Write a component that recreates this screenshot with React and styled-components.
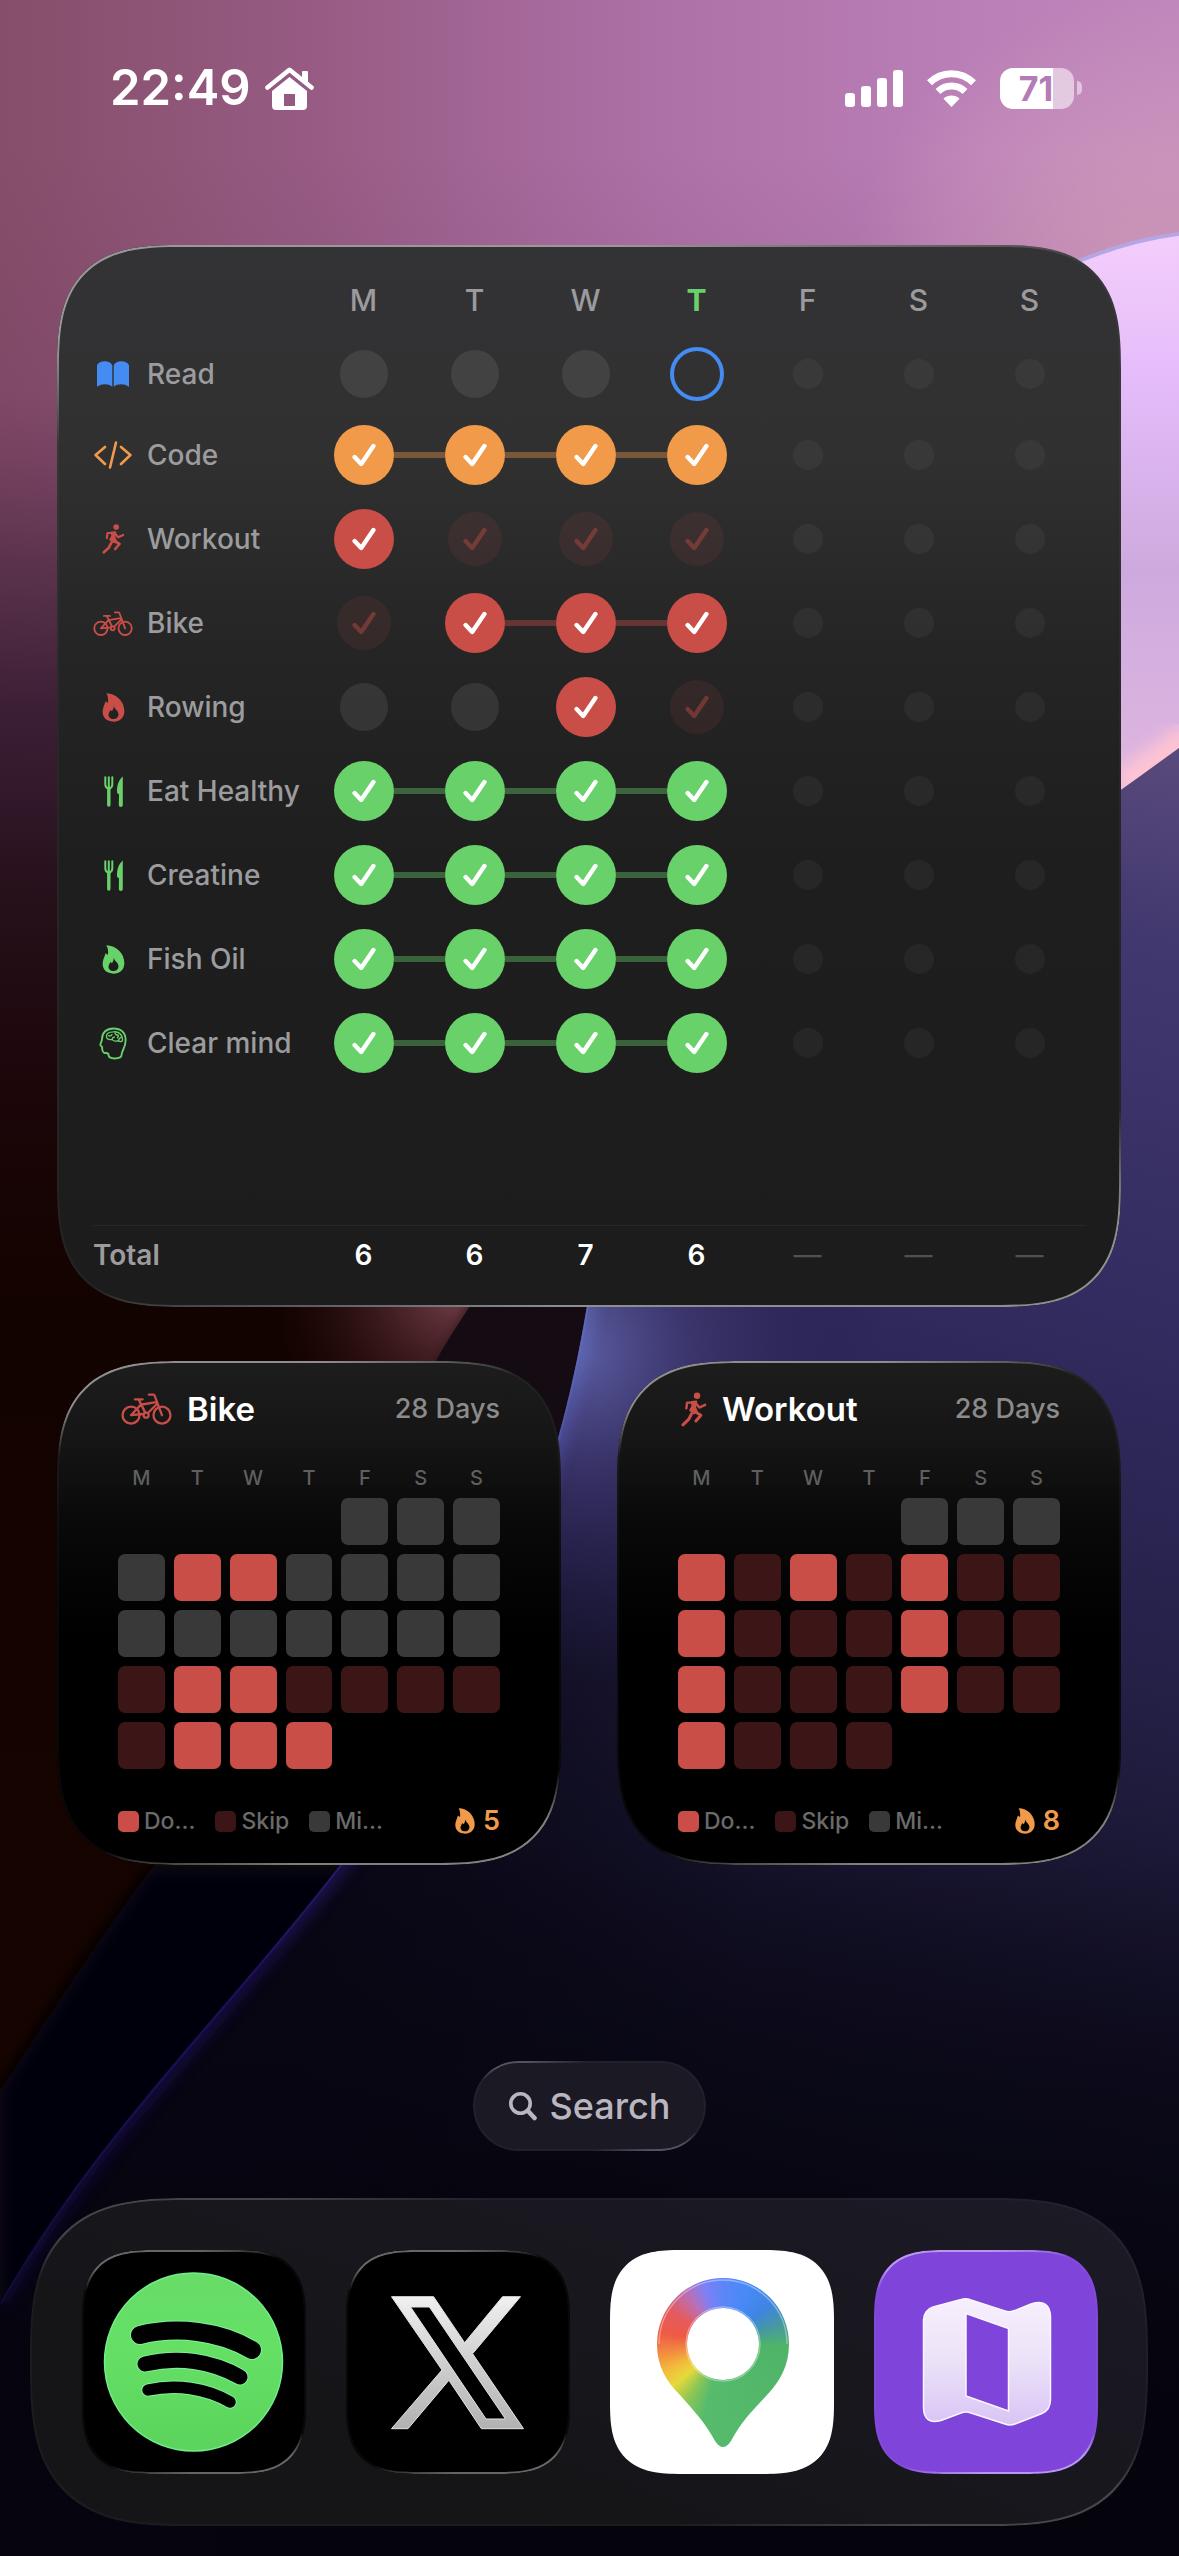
import React from "react";
import styled, { createGlobalStyle, css } from "styled-components";

const color = {
  green: "#68d16a",
  orange: "#f19b4a",
  red: "#c94e48",
  blue: "#448cf1",
  skip: "#3c1616",
  missed: "#393939",
};

const GlobalStyle = createGlobalStyle`
  *, *::before, *::after { box-sizing: border-box; }
  body {
    margin: 0;
    background: #05040c;
    color: #fff;
    font-family: Inter, "Liberation Sans", sans-serif;
  }
`;

/* ---------- Page ---------- */

const Screen = styled.div`
  position: relative;
  isolation: isolate;
  min-height: 100vh;
  display: flex;
  flex-direction: column;
  padding-bottom: 30px;
  overflow: hidden;
`;

const WallpaperSvg = styled.svg`
  position: absolute;
  inset: 0;
  z-index: -1;
  width: 100%;
  height: 100%;
`;

const StatusBar = styled.header`
  display: flex;
  align-items: center;
  justify-content: space-between;
  height: 176px;
  padding: 0 97px 0 110px;
`;

const StatusGroup = styled.div`
  display: flex;
  align-items: center;
  gap: ${(p) => p.$gap}px;
`;

const Clock = styled.time`
  font-size: 49px;
  font-weight: 600;
  line-height: 60px;
`;

const Battery = styled.div`
  display: flex;
  align-items: center;
  gap: 3px;
`;

const BatteryBody = styled.div`
  width: 74px;
  height: 41px;
  padding-right: 2px;
  border-radius: 13px;
  background: linear-gradient(to right, #fff 71%, rgba(255, 255, 255, 0.55) 71%);
  color: #b37cb6;
  font-size: 34px;
  font-weight: 700;
  line-height: 41px;
  text-align: center;
`;

const BatteryTip = styled.div`
  width: 5px;
  height: 14px;
  border-radius: 0 5px 5px 0;
  background: rgba(255, 255, 255, 0.5);
`;

const Widgets = styled.main`
  display: grid;
  grid-template-columns: 1fr 1fr;
  gap: 54px 56px;
  padding: 69px 58px 0 57px;
`;

const corners = (round, smooth) => css`
  border-radius: ${round}px;
  @supports (corner-shape: squircle) {
    border-radius: ${smooth}px;
    corner-shape: superellipse(1.5);
  }
`;

const glassEdge = css`
  position: relative;
  &::after {
    content: "";
    position: absolute;
    inset: 0;
    border-radius: inherit;
    corner-shape: inherit;
    padding: 2px;
    background: linear-gradient(
      170deg,
      rgba(255, 255, 255, ${(p) => p.$edge || 0.5}) 0%,
      rgba(255, 255, 255, ${(p) => p.$edge || 0.5}) 8%,
      rgba(255, 255, 255, 0.03) 16%,
      rgba(255, 255, 255, 0.03) 84%,
      rgba(255, 255, 255, ${(p) => p.$edge || 0.5}) 92%,
      rgba(255, 255, 255, ${(p) => p.$edge || 0.5}) 100%
    );
    mask: linear-gradient(#000 0 0) content-box exclude, linear-gradient(#000 0 0);
    pointer-events: none;
  }
`;

/* ---------- Week widget ---------- */

const WeekWidget = styled.section`
  ${glassEdge}
  ${corners(92, 124)}
  grid-column: 1 / -1;
  padding: 20px 36px 22px;
  background: linear-gradient(#333335 0%, #303031 20%, #252526 38%, #1e1e1f 58%, #1c1c1d 100%);
`;

const WeekTable = styled.table`
  width: 100%;
  table-layout: fixed;
  border-collapse: collapse;
`;

const LabelColumn = styled.col`
  width: 215px;
`;

const DayHead = styled.th`
  height: 70px;
  padding: 0;
  color: ${(p) => (p.$today ? color.green : "#9b9b9d")};
  font-size: 30px;
  font-weight: ${(p) => (p.$today ? 700 : 500)};
  line-height: 36px;
`;

const HabitRow = styled.tr`
  height: ${(p) => (p.$compact ? 78 : 84)}px;
`;

const HabitHead = styled.th`
  padding: 0;
  text-align: left;
  font-weight: 500;
`;

const HabitLabel = styled.div`
  display: grid;
  grid-template-columns: 40px 1fr;
  align-items: center;
  gap: 14px;
  color: #9c9c9e;
  font-size: 28px;
  line-height: 34px;
  white-space: nowrap;
`;

const IconSlot = styled.span`
  display: flex;
  justify-content: center;
  color: ${(p) => p.$tint};
`;

const DayCell = styled.td`
  padding: 0;
`;

const Track = styled.div`
  display: flex;
  align-items: center;
  justify-content: center;
`;

const Link = styled.span`
  flex: 1;
  height: 6px;
  background: ${(p) => (p.$on ? p.$tint : "transparent")};
  opacity: 0.38;
`;

const Mark = styled.span`
  display: flex;
  align-items: center;
  justify-content: center;
  border-radius: 50%;
  ${(p) =>
    ({
      done: css`
        width: 60px;
        height: 60px;
        background: ${p.$tint};
        color: #fff;
      `,
      skip: css`
        width: 54px;
        height: 54px;
        background: rgba(201, 78, 72, 0.1);
        color: rgba(201, 78, 72, 0.42);
      `,
      missed: css`
        width: 48px;
        height: 48px;
        background: rgba(255, 255, 255, 0.085);
      `,
      open: css`
        width: 54px;
        height: 54px;
        border: 4px solid ${p.$tint};
      `,
      future: css`
        width: 30px;
        height: 30px;
        background: rgba(255, 255, 255, 0.045);
      `,
    })[p.$kind]}
`;

const SpacerRow = styled.tr`
  height: 140px;
`;

const TotalRow = styled.tr`
  height: 60px;
  border-top: 1px solid #282829;
  font-size: 28px;
  line-height: 34px;
`;

const TotalHead = styled.th`
  padding: 0;
  text-align: left;
  color: #9c9c9e;
  font-weight: 600;
`;

const TotalCell = styled.td`
  padding: 0;
  text-align: center;
  color: ${(p) => (p.$empty ? "#515152" : "#fff")};
  font-weight: ${(p) => (p.$empty ? 400 : 600)};
`;

/* ---------- Habit widget ---------- */

const HabitWidget = styled.section`
  ${glassEdge}
  ${corners(92, 124)}
  padding: 28px 61px;
  background: linear-gradient(#1d1d1d 0%, #151515 16%, #090909 32%, #000 55%);
`;

const HabitHeader = styled.header`
  display: flex;
  align-items: center;
  height: 40px;
`;

const HabitTitle = styled.h2`
  flex: 1;
  margin: 0 0 0 15px;
  font-size: 33px;
  font-weight: 600;
  line-height: 40px;
`;

const HabitIcon = styled.span`
  display: flex;
  padding-left: 3px;
  color: ${color.red};
`;

const Period = styled.span`
  color: #8b8b8b;
  font-size: 27px;
  font-weight: 500;
  line-height: 32px;
`;

const Calendar = styled.table`
  width: calc(100% + 18px);
  margin: 29px -9px 0;
  table-layout: fixed;
  border-collapse: separate;
  border-spacing: 9px 9px;
`;

const WeekdayHead = styled.th`
  height: 22px;
  padding: 0;
  color: #5f5f5f;
  font-size: 20px;
  font-weight: 500;
  line-height: 22px;
`;

const CalendarCell = styled.td`
  height: 47px;
  padding: 0;
  border-radius: 7px;
  background: ${(p) => p.$fill};
`;

const Legend = styled.footer`
  display: flex;
  align-items: center;
  gap: 20px;
  height: 32px;
  margin-top: 27px;
  color: #6a6a6a;
  font-size: 23px;
  font-weight: 500;
  line-height: 32px;
`;

const LegendItem = styled.span`
  display: flex;
  align-items: center;
  gap: 5px;
`;

const Swatch = styled.span`
  width: 21px;
  height: 21px;
  border-radius: 5px;
  background: ${(p) => p.$fill};
`;

const Streak = styled.span`
  display: flex;
  align-items: center;
  gap: 8px;
  margin-left: auto;
  color: ${color.orange};
  font-size: 27px;
  font-weight: 600;
`;

/* ---------- Search and dock ---------- */

const SearchButton = styled.button`
  ${glassEdge}
  display: flex;
  align-items: center;
  align-self: center;
  gap: 13px;
  height: 90px;
  margin-top: auto;
  padding: 0 36px;
  border: 0;
  border-radius: 45px;
  background: #1b1924;
  color: #b9b6c0;
  font-family: inherit;
  font-size: 36px;
  font-weight: 500;
  line-height: 42px;
`;

const Dock = styled.nav`
  ${glassEdge}
  ${corners(128, 158)}
  display: grid;
  grid-template-columns: repeat(4, 1fr);
  gap: 40px;
  margin: 47px 31px 0 30px;
  padding: 52px 50px 52px 52px;
  background: linear-gradient(20deg, #151518 30%, #1c1a26 100%);
`;

const AppLink = styled.a`
  ${glassEdge}
  ${corners(56, 72)}
  display: block;
  aspect-ratio: 1;
  background: ${(p) => p.$fill};
`;

const AppArt = styled.svg`
  display: block;
  width: 100%;
  height: 100%;
`;

const PinPaint = styled.div`
  width: 224px;
  height: 224px;
  background: conic-gradient(
    from 0deg at 113px 94px,
    #5c86f8 0deg,
    #4889f8 25deg,
    #3f85e0 50deg,
    #4597a6 70deg,
    #4fb468 92deg,
    #57bb6c 195deg,
    #8cc655 212deg,
    #e6d93c 230deg,
    #f3bb3c 245deg,
    #f28a40 262deg,
    #ee5b45 280deg,
    #e55a5e 302deg,
    #b970b6 325deg,
    #7d80f6 342deg,
    #5c86f8 360deg
  );
`;

/* ---------- Icons ---------- */

const stroke = {
  fill: "none",
  stroke: "currentColor",
  strokeLinecap: "round",
  strokeLinejoin: "round",
};

const Check = () => (
  <svg width="24" height="24" viewBox="0 0 24 24" {...stroke} strokeWidth="4.4" aria-hidden="true">
    <path d="M2.6 14 9.2 21 21.4 3" />
  </svg>
);

const BookIcon = () => (
  <svg width="32" height="26" viewBox="0 0 31 25" fill="currentColor" aria-hidden="true">
    <path d="M0 4C2-.9 12.500-1.500 14.800 4V24.800C11.500 21.600 4.500 21.600 0 24.800ZM16.200 4C18.500-1.500 29-.9 31 4V24.800C26.500 21.600 19.500 21.600 16.200 24.800Z" />
  </svg>
);

const CodeIcon = () => (
  <svg width="38" height="28" viewBox="0 0 38 28" {...stroke} strokeWidth="2.6" aria-hidden="true">
    <path d="M11 6 1.600 14 11 23M27 6 36.400 14 27 23M22 1.500 16 26.500" />
  </svg>
);

const RunIcon = ({ height }) => (
  <svg width={Math.round(height * 0.75)} height={height} viewBox="0 0 68 90" {...stroke} aria-hidden="true">
    <circle cx="42" cy="9" r="8.500" fill="currentColor" stroke="none" />
    <path d="M14 42 16 27H31M40 30 48 40 63 33" strokeWidth="6.500" />
    <path d="M28 25 40 24 37 40 42 51 33 55 24 47 30 36Z" fill="currentColor" strokeWidth="5" />
    <path d="M37 51 52 60 39 75" strokeWidth="8" />
    <path d="M27 57 20 71 5 85" strokeWidth="8" />
  </svg>
);

const BikeIcon = ({ width }) => (
  <svg width={width} height={Math.round(width * 0.62)} viewBox="0 0 132 82" {...stroke} strokeWidth="6" aria-hidden="true">
    <circle cx="26" cy="57" r="22" />
    <circle cx="106" cy="57" r="22" />
    <circle cx="65" cy="57" r="6.500" />
    <path d="M36 16H56M46 17 63 51M26 57 51 30 91 23M26 57 58 54M69 52 93 28M72 4H84Q87 4 88 9L106 57" />
  </svg>
);

const FlameIcon = ({ height }) => (
  <svg width={Math.round(height * 0.78)} height={height} viewBox="2 1 68 88" fill="currentColor" fillRule="evenodd" aria-hidden="true">
    <path d="M14 2C45 2 69 28 69 56C69 76 54 88 36 88C16 88 3 76 3 59C3 46 8 40 12 26L19 31C21 20 19 10 14 2ZM37 39C39 52 52 54 51 67C50 77 42 80 36 80C27 80 20 74 21 66C22 59 26 56 27 52L31 56C35 52 37 46 37 39Z" />
  </svg>
);

const ForkKnifeIcon = () => (
  <svg width="19" height="31" viewBox="0 0 19 31" aria-hidden="true">
    <g {...stroke}>
      <path d="M1.300 1.200V8.500Q1.500 12 4.800 13Q8.100 12 8.300 8.500V1.200M4.800 1.200V12" strokeWidth="2" />
      <path d="M4.800 12V29" strokeWidth="3.400" />
    </g>
    <path d="M18.800.4C14.500 4 13 9 13 15.500C13 17.700 14 18 15 18L14.800 29A2 2 0 0 0 18.800 29Z" fill="currentColor" />
  </svg>
);

const MindIcon = () => (
  <svg width="28" height="33" viewBox="0 0 82 96" {...stroke} strokeWidth="5.500" aria-hidden="true">
    <path d="M28 82C28 90 34 92 46 92C58 92 66 88 66 82C66 68 78 62 78 38C78 16 64 4 42 4C22 4 9 16 9 34C9 42 3 48 4 53C5 56 9 55 9 58C9 72 12 76 20 76C26 76 28 77 28 82Z" />
    <path d="M22 29C20 20 28 14 42 14C58 12 69 22 69 37C69 43 62 44 57 40C50 42 42 41 38 36C28 38 23 35 22 29ZM28 25Q34 28 38 22M38 36Q39 30 45 29M47 18Q49 24 54 23Q60 24 54 31M57 40Q58 33 64 30" strokeWidth="4" />
  </svg>
);

const HomeIcon = () => (
  <svg width="49" height="43" viewBox="0 0 49 43" aria-hidden="true">
    <path d="M24.500 10 42 24V39Q42 43 38 43H11Q7 43 7 39V24ZM19 27V39H30V27Z" fill="#fff" fillRule="evenodd" />
    <path d="M2.500 20.500 24.500 2.800 46.500 20.500" fill="none" stroke="#fff" strokeWidth="4.600" strokeLinecap="round" strokeLinejoin="round" />
    <path d="M37 5Q37 4 38 4H42Q43 4 43 5V16L37 11Z" fill="#fff" />
  </svg>
);

const SignalIcon = () => (
  <svg width="58" height="37" viewBox="0 0 58 37" fill="#fff" role="img" aria-label="Signal">
    <rect x="0" y="23" width="10" height="14" rx="3" />
    <rect x="16" y="16" width="10" height="21" rx="3" />
    <rect x="32" y="8" width="10" height="29" rx="3" />
    <rect x="48" y="0" width="10" height="37" rx="3" />
  </svg>
);

const WifiIcon = () => (
  <svg width="51" height="37" viewBox="0 0 51 37" role="img" aria-label="Wi-Fi">
    <path d="M3.500 12.800A31 31 0 0 1 47.500 12.800M12 21.500A19.500 19.500 0 0 1 39 21.500" fill="none" stroke="#fff" strokeWidth="7" />
    <path d="M25.500 37 17.500 28.800A11.500 11.500 0 0 1 33.500 28.800Z" fill="#fff" />
  </svg>
);

const SearchIcon = () => (
  <svg width="28" height="29" viewBox="0 0 28 29" {...stroke} aria-hidden="true">
    <circle cx="11.500" cy="11.500" r="9.700" strokeWidth="3.600" />
    <path d="M19 19 25.500 26" strokeWidth="4.600" />
  </svg>
);

const Wallpaper = () => (
  <WallpaperSvg viewBox="0 0 1179 2556" preserveAspectRatio="none" aria-hidden="true">
    <defs>
      <linearGradient id="sky" x1="0" y1="0" x2="1" y2="0">
        <stop offset="0" stopColor="#864e69" />
        <stop offset=".28" stopColor="#985c85" />
        <stop offset=".55" stopColor="#ad70a6" />
        <stop offset=".8" stopColor="#b97eb6" />
        <stop offset="1" stopColor="#bf86bc" />
      </linearGradient>
      <linearGradient id="dusk" x1="0" y1="0" x2="0" y2="1">
        <stop offset="0" stopColor="#5a2a52" stopOpacity="0" />
        <stop offset=".1" stopColor="#5a2a52" stopOpacity=".15" />
        <stop offset=".17" stopColor="#3f2038" stopOpacity=".6" />
        <stop offset=".23" stopColor="#341a30" stopOpacity=".9" />
        <stop offset=".31" stopColor="#26101a" />
        <stop offset=".4" stopColor="#1b0508" />
        <stop offset=".48" stopColor="#130300" />
        <stop offset=".85" stopColor="#170400" />
        <stop offset="1" stopColor="#0d0200" />
      </linearGradient>
      <radialGradient id="blush" gradientUnits="userSpaceOnUse" cx="1150" cy="290" r="300">
        <stop offset="0" stopColor="#d9a6bd" stopOpacity=".75" />
        <stop offset="1" stopColor="#d9a6bd" stopOpacity="0" />
      </radialGradient>
      <radialGradient id="ember" gradientUnits="userSpaceOnUse" cx="455" cy="1290" r="180">
        <stop offset="0" stopColor="#74404a" />
        <stop offset="1" stopColor="#3a1218" stopOpacity="0" />
      </radialGradient>
      <linearGradient id="petal" gradientUnits="userSpaceOnUse" x1="0" y1="240" x2="0" y2="790">
        <stop offset="0" stopColor="#f3cdfb" />
        <stop offset=".25" stopColor="#e5bcfa" />
        <stop offset=".6" stopColor="#cdaade" />
        <stop offset="1" stopColor="#e0b6e0" />
      </linearGradient>
      <linearGradient id="night" gradientUnits="userSpaceOnUse" x1="1179" y1="750" x2="760" y2="2300">
        <stop offset="0" stopColor="#5a4a7c" />
        <stop offset=".12" stopColor="#41386f" />
        <stop offset=".38" stopColor="#302a5d" />
        <stop offset=".6" stopColor="#221e42" />
        <stop offset=".78" stopColor="#100e22" />
        <stop offset="1" stopColor="#06050f" />
      </linearGradient>
      <radialGradient id="glow" gradientUnits="userSpaceOnUse" cx="575" cy="1350" r="330">
        <stop offset="0" stopColor="#5d60a6" />
        <stop offset=".35" stopColor="#474080" stopOpacity=".7" />
        <stop offset="1" stopColor="#2c2660" stopOpacity="0" />
      </radialGradient>
      <linearGradient id="shade" gradientUnits="userSpaceOnUse" x1="330" y1="1700" x2="780" y2="1800">
        <stop offset="0" stopColor="#080613" stopOpacity=".9" />
        <stop offset="1" stopColor="#080613" stopOpacity="0" />
      </linearGradient>
      <linearGradient id="rim" gradientUnits="userSpaceOnUse" x1="0" y1="1300" x2="0" y2="2400">
        <stop offset="0" stopColor="#6478c6" />
        <stop offset=".3" stopColor="#4636a8" />
        <stop offset=".65" stopColor="#26147a" />
        <stop offset="1" stopColor="#120a3c" />
      </linearGradient>
      <linearGradient id="floor" gradientUnits="userSpaceOnUse" x1="0" y1="1850" x2="0" y2="2400">
        <stop offset="0" stopColor="#05040d" stopOpacity="0" />
        <stop offset="1" stopColor="#05040d" stopOpacity=".75" />
      </linearGradient>
      <clipPath id="nightArea">
        <path d="M1179 748 1121 790 C900 950 640 1100 588 1300 C565 1440 520 1620 340 1865 C220 2020 100 2130 0 2303V2556H1179Z" />
      </clipPath>
      <filter id="soft" x="-20%" y="-20%" width="140%" height="140%">
        <feGaussianBlur stdDeviation="8" />
      </filter>
    </defs>
    <rect width="1179" height="2556" fill="url(#sky)" />
    <rect width="1179" height="700" fill="url(#blush)" />
    <rect y="150" width="1179" height="2406" fill="url(#dusk)" />
    <rect x="200" y="1100" width="400" height="400" fill="url(#ember)" />
    <path d="M500 1260 C420 1390 330 1650 150 1870 C90 1950 40 2030 0 2090V2556H700V1260Z" fill="#0b0709" filter="url(#soft)" />
    <path d="M500 1260C468 1310 450 1335 436 1361L380 1480H620V1260Z" fill="#140c12" />
    <path d="M150 1870 C90 1950 40 2030 0 2090V2556H400V1870Z" fill="#040308" filter="url(#soft)" />
    <path d="M1075 262Q1125 240 1179 233V748L1121 790 900 900V400Z" fill="url(#petal)" />
    <path d="M1065 267Q1125 240 1185 233" fill="none" stroke="#b3a6e2" strokeWidth="4" />
    <path d="M1190 735 1121 786" stroke="#ffc4d3" strokeWidth="26" filter="url(#soft)" />
    <g clipPath="url(#nightArea)">
      <rect width="1179" height="2556" fill="url(#night)" />
      <rect y="1300" width="1179" height="1256" fill="url(#shade)" />
      <rect width="1179" height="2556" fill="url(#glow)" />
      <rect y="1850" width="1179" height="706" fill="url(#floor)" />
      <path d="M588 1300 C565 1440 520 1620 340 1865 C220 2020 100 2130 0 2303" fill="none" stroke="url(#rim)" strokeWidth="14" opacity=".6" filter="url(#soft)" />
      <path d="M588 1300 C565 1440 520 1620 340 1865 C220 2020 100 2130 0 2303" fill="none" stroke="url(#rim)" strokeWidth="4" opacity=".5" />
    </g>
  </WallpaperSvg>
);

const SpotifyArt = () => (
  <AppArt viewBox="0 0 224 224" aria-hidden="true">
    <defs>
      <linearGradient id="spotifyFill" x1="0" y1="0" x2="0" y2="1">
        <stop offset="0" stopColor="#67dc68" />
        <stop offset=".4" stopColor="#65e065" />
        <stop offset="1" stopColor="#5bd35c" />
      </linearGradient>
    </defs>
    <circle cx="111.500" cy="112" r="89" fill="url(#spotifyFill)" stroke="#6fee8a" strokeWidth="1.500" />
    {[
      ["M58 85C95 76 138 81 170 100", 18],
      ["M63 114C96 106 130 111 158 127", 15],
      ["M66 140C94 134 124 138 148 152", 11.5],
    ].map(([d, w]) => (
      <g key={d} fill="none" strokeLinecap="round">
        <path d={d} stroke="#7df39a" strokeWidth={w + 2} />
        <path d={d} stroke="#000" strokeWidth={w} />
      </g>
    ))}
  </AppArt>
);

const XArt = () => (
  <AppArt viewBox="0 0 224 224" aria-hidden="true">
    <defs>
      <linearGradient id="xFill" x1="0" y1="0" x2="0" y2="1">
        <stop offset="0" stopColor="#f0f0f0" />
        <stop offset=".5" stopColor="#cfcfcf" />
        <stop offset="1" stopColor="#b2b2b2" />
      </linearGradient>
    </defs>
    <path
      d="M45.500 46.700H87.600L118.600 92.700 156.500 46.700H174.500L126.600 103.700 177.500 178.700H135.400L102.900 130.300 62 178.700H45.500L96 120ZM64.600 57 140 169H159.500L83.400 57Z"
      fill="url(#xFill)"
      fillRule="evenodd"
      stroke="#e4e4e4"
      strokeWidth="1"
    />
  </AppArt>
);

const MapsArt = () => (
  <AppArt viewBox="0 0 224 224" aria-hidden="true">
    <defs>
      <clipPath id="pin">
        <path
          clipRule="evenodd"
          d="M113 28A66 66 0 0 1 179 94C179 116 170 131 157 145C143 160 131 172 121 191Q113 203 105 191C95 172 83 160 70 145C56 131 47 116 47 94A66 66 0 0 1 113 28ZM113 58A36 36 0 1 0 113 130A36 36 0 1 0 113 58Z"
        />
      </clipPath>
    </defs>
    <g clipPath="url(#pin)">
      <foreignObject width="224" height="224">
        <PinPaint />
      </foreignObject>
    </g>
    <circle cx="113" cy="94" r="37" fill="none" stroke="#fff" strokeOpacity=".35" strokeWidth="1.500" />
    <path d="M49 94A64 64 0 0 1 177 94" fill="none" stroke="#fff" strokeOpacity=".35" strokeWidth="1.500" />
  </AppArt>
);

const MapArt = () => (
  <AppArt viewBox="0 0 224 224" aria-hidden="true">
    <defs>
      <linearGradient id="mapFill" x1="0" y1="0" x2="0" y2="1">
        <stop offset="0" stopColor="#f7effc" />
        <stop offset=".5" stopColor="#ebe2f8" />
        <stop offset="1" stopColor="#d9c4f5" />
      </linearGradient>
    </defs>
    <path
      d="M59 57 87 49.500Q92 48 97 50L131 61Q136 62.500 141 60.500L157 54Q176 48 176.500 67V149Q176.500 160 168 163.500L141 174Q136 176 131 174L97 163Q92 161 87 163L67 170.500Q50 175 49.500 158V70Q50 60 59 57ZM92 63.500V146L134.500 161V78.500Z"
      fill="url(#mapFill)"
      fillRule="evenodd"
      stroke="#fbf6ff"
      strokeWidth="1.500"
    />
  </AppArt>
);

/* ---------- Data ---------- */

const weekdays = ["M", "T", "W", "T", "F", "S", "S"];
const today = 3;

const habits = [
  { name: "Read", tint: color.blue, icon: <BookIcon />, days: "mmmo" },
  { name: "Code", tint: color.orange, icon: <CodeIcon />, days: "dddd" },
  { name: "Workout", tint: color.red, icon: <RunIcon height={30} />, days: "dsss" },
  { name: "Bike", tint: color.red, icon: <BikeIcon width={44} />, days: "sddd" },
  { name: "Rowing", tint: color.red, icon: <FlameIcon height={29} />, days: "mmds" },
  { name: "Eat Healthy", tint: color.green, icon: <ForkKnifeIcon />, days: "dddd" },
  { name: "Creatine", tint: color.green, icon: <ForkKnifeIcon />, days: "dddd" },
  { name: "Fish Oil", tint: color.green, icon: <FlameIcon height={29} />, days: "dddd" },
  { name: "Clear mind", tint: color.green, icon: <MindIcon />, days: "dddd" },
];

const totals = ["6", "6", "7", "6", "—", "—", "—"];

const kinds = { d: "done", s: "skip", m: "missed", o: "open", ".": "future" };
const fills = { d: color.red, s: color.skip, m: color.missed, ".": "transparent" };

const history = [
  {
    name: "Bike",
    icon: <BikeIcon width={51} />,
    streak: 5,
    weeks: ["....mmm", "mddmmmm", "mmmmmmm", "sddssss", "sddd..."],
  },
  {
    name: "Workout",
    icon: <RunIcon height={35} />,
    streak: 8,
    weeks: ["....mmm", "dsdsdss", "dsssdss", "dsssdss", "dsss..."],
  },
];

const HabitDays = ({ habit }) => {
  const days = habit.days.padEnd(7, ".");
  const linked = (a, b) => days[a] === "d" && days[b] === "d";
  return weekdays.map((_, i) => (
    <DayCell key={i}>
      <Track>
        <Link $tint={habit.tint} $on={linked(i - 1, i)} />
        <Mark $kind={kinds[days[i]]} $tint={habit.tint}>
          {(days[i] === "d" || days[i] === "s") && <Check />}
        </Mark>
        <Link $tint={habit.tint} $on={linked(i, i + 1)} />
      </Track>
    </DayCell>
  ));
};

export default function App() {
  return (
    <Screen>
      <GlobalStyle />
      <Wallpaper />
      <StatusBar>
        <StatusGroup $gap={14}>
          <Clock>22:49</Clock>
          <HomeIcon />
        </StatusGroup>
        <StatusGroup $gap={23}>
          <SignalIcon />
          <WifiIcon />
          <Battery>
            <BatteryBody>71</BatteryBody>
            <BatteryTip />
          </Battery>
        </StatusGroup>
      </StatusBar>

      <Widgets>
        <WeekWidget>
          <WeekTable>
            <colgroup>
              <LabelColumn />
              <col span={7} />
            </colgroup>
            <thead>
              <tr>
                <td />
                {weekdays.map((d, i) => (
                  <DayHead key={i} scope="col" $today={i === today}>
                    {d}
                  </DayHead>
                ))}
              </tr>
            </thead>
            <tbody>
              {habits.map((h, i) => (
                <HabitRow key={h.name} $compact={i === 0}>
                  <HabitHead scope="row">
                    <HabitLabel>
                      <IconSlot $tint={h.tint}>{h.icon}</IconSlot>
                      {h.name}
                    </HabitLabel>
                  </HabitHead>
                  <HabitDays habit={h} />
                </HabitRow>
              ))}
              <SpacerRow aria-hidden="true">
                <td colSpan={8} />
              </SpacerRow>
            </tbody>
            <tfoot>
              <TotalRow>
                <TotalHead scope="row">Total</TotalHead>
                {totals.map((t, i) => (
                  <TotalCell key={i} $empty={i > today}>
                    {t}
                  </TotalCell>
                ))}
              </TotalRow>
            </tfoot>
          </WeekTable>
        </WeekWidget>

        {history.map((h) => (
          <HabitWidget key={h.name}>
            <HabitHeader>
              <HabitIcon>{h.icon}</HabitIcon>
              <HabitTitle>{h.name}</HabitTitle>
              <Period>28 Days</Period>
            </HabitHeader>
            <Calendar>
              <thead>
                <tr>
                  {weekdays.map((d, i) => (
                    <WeekdayHead key={i} scope="col">
                      {d}
                    </WeekdayHead>
                  ))}
                </tr>
              </thead>
              <tbody>
                {h.weeks.map((week, w) => (
                  <tr key={w}>
                    {[...week].map((day, i) => (
                      <CalendarCell key={i} $fill={fills[day]} />
                    ))}
                  </tr>
                ))}
              </tbody>
            </Calendar>
            <Legend>
              <LegendItem>
                <Swatch $fill={color.red} />
                Do…
              </LegendItem>
              <LegendItem>
                <Swatch $fill={color.skip} />
                Skip
              </LegendItem>
              <LegendItem>
                <Swatch $fill={color.missed} />
                Mi…
              </LegendItem>
              <Streak>
                <FlameIcon height={26} />
                {h.streak}
              </Streak>
            </Legend>
          </HabitWidget>
        ))}
      </Widgets>

      <SearchButton type="button" $edge={0.25}>
        <SearchIcon />
        Search
      </SearchButton>

      <Dock aria-label="Dock" $edge={0.2}>
        <AppLink href="#spotify" aria-label="Spotify" $fill="#000" $edge={0.4}>
          <SpotifyArt />
        </AppLink>
        <AppLink href="#x" aria-label="X" $fill="#000" $edge={0.4}>
          <XArt />
        </AppLink>
        <AppLink href="#google-maps" aria-label="Google Maps" $fill="#fff">
          <MapsArt />
        </AppLink>
        <AppLink href="#maps" aria-label="Maps" $fill="#7f44da" $edge={0.45}>
          <MapArt />
        </AppLink>
      </Dock>
    </Screen>
  );
}
